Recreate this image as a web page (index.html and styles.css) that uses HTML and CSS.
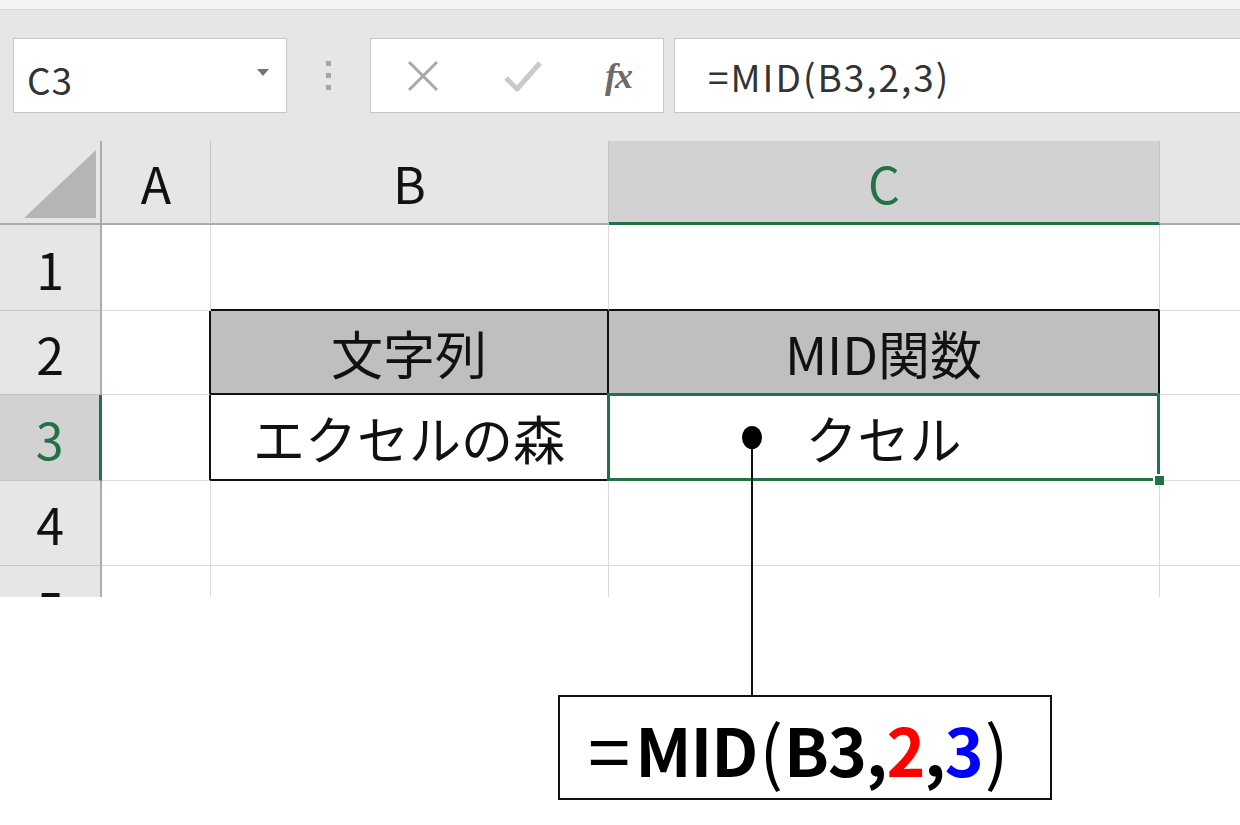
FILE: index.html
```html
<!DOCTYPE html>
<html lang="ja">
<head>
    <meta charset="UTF-8">
    <meta name="viewport" content="width=device-width, initial-scale=1.0">
    <title>MID関数</title>
    <link rel="stylesheet" href="styles.css">
</head>
<body>
    <!-- Ribbon edge (cut off) -->
    <div class="ribbon-edge">
        <div class="ribbon-labels">
            <span class="label-left">ホーム 挿入 描画 ページ</span>
            <span class="label-right">データ 校閲</span>
        </div>
    </div>

    <!-- Formula bar -->
    <div class="formula-bar">
        <div class="name-box">
            <span class="name-text">C3</span>
            <svg class="name-arrow" width="12" height="8" viewBox="0 0 12 8"><path d="M0 0 L12 0 L6 7 Z" fill="#737373"/></svg>
        </div>
        <div class="bar-grip">
            <span></span><span></span><span></span>
        </div>
        <div class="bar-buttons">
            <svg class="btn-icon" width="34" height="32" viewBox="0 0 34 32"><path d="M3 2 L31 30 M31 2 L3 30" stroke="#a9a9a9" stroke-width="3" fill="none"/></svg>
            <svg class="btn-icon" width="38" height="32" viewBox="0 0 38 32"><path d="M2 18 L13 29 L36 3" stroke="#cacaca" stroke-width="5" fill="none" stroke-linejoin="round"/></svg>
            <span class="fx">fx</span>
        </div>
        <div class="formula-input">=MID(B3,2,3)</div>
    </div>

    <!-- Sheet -->
    <div class="sheet">
        <div class="grid">
            <!-- header row -->
            <div class="corner">
                <svg width="72" height="68" viewBox="0 0 72 68"><path d="M0 68 L72 0 L72 68 Z" fill="#b5b5b5"/></svg>
            </div>
            <div class="col-head">A</div>
            <div class="col-head">B</div>
            <div class="col-head active">C</div>
            <div class="col-head"></div>

            <!-- row 1 -->
            <div class="row-head">1</div>
            <div class="cell"></div>
            <div class="cell edge-bottom"></div>
            <div class="cell edge-bottom"></div>
            <div class="cell"></div>

            <!-- row 2 -->
            <div class="row-head">2</div>
            <div class="cell edge-right"></div>
            <div class="cell boxed title">文字列</div>
            <div class="cell boxed title">MID関数</div>
            <div class="cell"></div>

            <!-- row 3 -->
            <div class="row-head active">3</div>
            <div class="cell edge-right"></div>
            <div class="cell boxed">エクセルの森</div>
            <div class="cell boxed selected">クセル
                <div class="selection"><span class="fill-handle"></span></div>
            </div>
            <div class="cell"></div>

            <!-- row 4 -->
            <div class="row-head">4</div>
            <div class="cell"></div>
            <div class="cell"></div>
            <div class="cell"></div>
            <div class="cell"></div>

            <!-- row 5 -->
            <div class="row-head">5</div>
            <div class="cell"></div>
            <div class="cell"></div>
            <div class="cell"></div>
            <div class="cell"></div>
        </div>

        <!-- Callout -->
        <div class="callout-row">
            <div class="callout-box">
                <span class="eq">=</span>MID<span class="paren">(</span>B3,<span class="arg-red">2</span>,<span class="arg-blue">3</span><span class="paren">)</span>
            </div>
        </div>
        <div class="leader-line"></div>
        <div class="leader-dot"></div>
    </div>
</body>
</html>
```

FILE: styles.css
```css
/* Basic page */
body {
    margin: 0;
    padding: 0;
    width: 1240px;
    overflow: hidden;
    background-color: #fff;
    font-family: "Noto Sans CJK JP", "Noto Sans", sans-serif;
    color: #000;
}
/* Ribbon edge */
.ribbon-edge {
    height: 9px;
    background-color: #f3f3f3;
    border-bottom: 1px solid #d5d5d5;
    overflow: hidden;
}
.ribbon-labels {
    margin-top: -29px;
    font-size: 22px;
    line-height: 30px;
    color: #444;
    white-space: nowrap;
}
.label-left {
    margin-left: 30px;
}
.label-right {
    margin-left: 300px;
}
/* Formula bar */
.formula-bar {
    display: flex;
    align-items: center;
    height: 131px;
    padding-left: 13px;
    background-color: #e6e6e6;
    box-sizing: border-box;
}
.name-box,
.bar-buttons,
.formula-input {
    height: 75px;
    background-color: #fff;
    border: 1px solid #c6c6c6;
    box-sizing: border-box;
    display: flex;
    align-items: center;
}
.name-box {
    width: 274px;
    padding: 0 17px 0 13px;
    justify-content: space-between;
}
.name-text {
    font-size: 37px;
    letter-spacing: 1px;
    color: #333;
    padding-top: 6px;
}
.name-arrow {
    margin-top: -6px;
}
.bar-grip {
    display: flex;
    flex-direction: column;
    gap: 7px;
    margin: 0 39px;
}
.bar-grip span {
    width: 5px;
    height: 5px;
    background-color: #a5a5a5;
}
.bar-buttons {
    width: 294px;
    padding: 0 32px 0 35px;
    justify-content: space-between;
}
.fx {
    font-family: "Liberation Serif", serif;
    font-style: italic;
    font-weight: bold;
    font-size: 36px;
    color: #6a6a6a;
    letter-spacing: -2px;
}
.formula-input {
    flex: 1;
    margin-left: 10px;
    margin-right: -10px;
    padding-left: 33px;
    font-size: 37px;
    letter-spacing: 2px;
    color: #333;
}
/* Sheet */
.sheet {
    position: relative;
    height: 684px;
}
.grid {
    display: grid;
    grid-template-columns: 102px 109px 398px 551px 100px;
    grid-template-rows: 84px 86px 84px 86px 85px 85px;
    height: 456px;
    overflow: hidden;
    font-size: 50px;
    line-height: 1;
}
.grid > div {
    box-sizing: border-box;
    display: flex;
    align-items: center;
    justify-content: center;
}
.corner {
    background-color: #e6e6e6;
    border-right: 2px solid #ababab;
    border-bottom: 2px solid #ababab;
    align-items: flex-end !important;
    justify-content: flex-end !important;
    padding: 0 4px 5px 0;
}
.col-head {
    background-color: #e6e6e6;
    border-right: 1px solid #c4c4c4;
    border-bottom: 2px solid #ababab;
    color: #111;
}
.col-head.active {
    background-color: #d2d2d2;
    border-bottom: 3px solid #217346;
    color: #217346;
}
.row-head {
    background-color: #e6e6e6;
    border-right: 2px solid #ababab;
    border-bottom: 1px solid #c4c4c4;
    color: #111;
}
.row-head.active {
    background-color: #d2d2d2;
    border-right: 3px solid #217346;
    color: #217346;
}
.cell {
    border-right: 1px solid #dadada;
    border-bottom: 1px solid #dadada;
    color: #111;
    font-size: 52px;
}
.cell.edge-bottom {
    border-bottom: 2px solid #111;
}
.cell.edge-right {
    border-right: 2px solid #111;
}
.cell.boxed {
    border-right: 2px solid #111;
    border-bottom: 2px solid #111;
    padding-top: 2px;
}
.cell.title {
    background-color: #bfbfbf;
}
.cell.selected {
    position: relative;
}
.selection {
    position: absolute;
    top: -2px;
    left: -2px;
    right: -2px;
    bottom: -2px;
    border: 3px solid #217346;
}
.fill-handle {
    position: absolute;
    right: -7px;
    bottom: -7px;
    width: 9px;
    height: 9px;
    background-color: #217346;
    border-left: 2px solid #fff;
    border-top: 2px solid #fff;
}
/* Callout */
.callout-row {
    padding: 98px 0 0 558px;
}
.callout-box {
    width: 494px;
    height: 105px;
    border: 2px solid #111;
    box-sizing: border-box;
    display: flex;
    align-items: center;
    padding-left: 28px;
    font-size: 66px;
    font-weight: bold;
    letter-spacing: -1px;
}
.eq {
    font-weight: normal;
    font-size: 76px;
    margin-right: 6px;
}
.paren {
    font-weight: normal;
    font-size: 70px;
    margin: 0 2px;
}
.arg-red {
    color: #ff0000;
}
.arg-blue {
    color: #0000ff;
}
.leader-line {
    position: absolute;
    left: 751px;
    top: 296px;
    width: 1.5px;
    height: 258px;
    background-color: #111;
}
.leader-dot {
    position: absolute;
    left: 742px;
    top: 285px;
    width: 20px;
    height: 23px;
    border-radius: 50%;
    background-color: #000;
}
```
